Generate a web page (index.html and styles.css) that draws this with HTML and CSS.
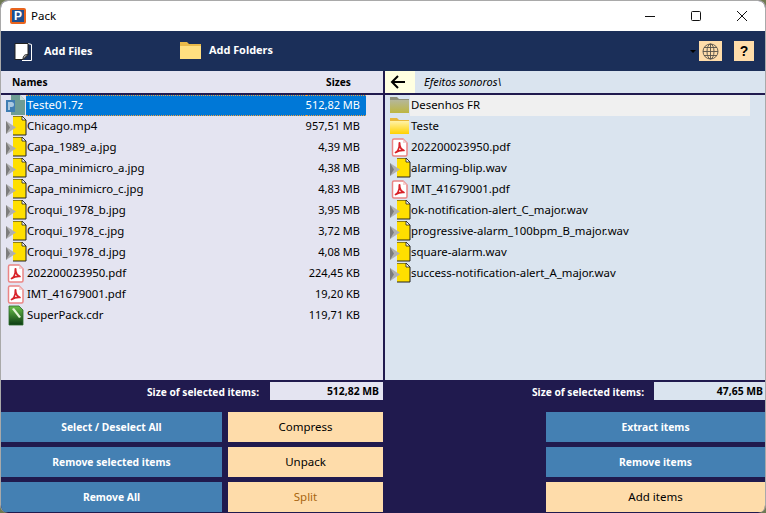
FILE: index.html
```html
<!DOCTYPE html>
<html lang="en">
<head>
    <meta charset="UTF-8">
    <meta name="viewport" content="width=device-width, initial-scale=1.0">
    <title>Pack</title>
    <link rel="stylesheet" href="styles.css">
</head>
<body>
    <svg class="defs" width="0" height="0">
        <defs>
            <linearGradient id="cdr-grad" x1="0" y1="0" x2="0" y2="1">
                <stop offset="0" stop-color="#6cc24a"/>
                <stop offset="1" stop-color="#0a3a12"/>
            </linearGradient>
            <linearGradient id="folder-grad" x1="0" y1="0" x2="0" y2="1">
                <stop offset="0" stop-color="#fff2a8"/>
                <stop offset="1" stop-color="#ffd200"/>
            </linearGradient>
            <linearGradient id="folder-sel-grad" x1="0" y1="0" x2="0" y2="1">
                <stop offset="0" stop-color="#b5b79a"/>
                <stop offset="1" stop-color="#bdb640"/>
            </linearGradient>
        </defs>
        <symbol id="i-media" viewBox="0 0 24 21">
            <path d="M9 0h9l4 4v15H9z" fill="#ffdf00"/>
            <path d="M9 0h9l4 4v15H9" fill="none" stroke="#222"/>
            <path d="M18 0v4h4z" fill="#fff" stroke="#222" stroke-width=".8"/>
            <path d="M2 5l10 6.500L2 18z" fill="#b0b0b0"/>
            <path d="M2 5l4 6.500L2 18z" fill="#7c7c7c"/>
        </symbol>
        <symbol id="i-pdf" viewBox="0 0 24 21">
            <path d="M6 2h9l4 4v11.500a1.500 1.500 0 0 1-1.500 1.500H6a1.500 1.500 0 0 1-1.500-1.500v-14A1.500 1.500 0 0 1 6 2z" fill="#fff" stroke="#ea8585" stroke-width="1.500"/>
            <path d="M15 2v4h4z" fill="#f5d0d0"/>
            <path d="M7.500 15.500c2-1 3.500-4 4-7.500.5 2.500 2 4.500 4.500 5.500-3-.2-6 .4-8.500 2z" fill="none" stroke="#d8232a" stroke-width="1.700" stroke-linejoin="round"/>
            <path d="M11.500 8V6" stroke="#d8232a" stroke-width="2" stroke-linecap="round"/>
        </symbol>
        <symbol id="i-cdr" viewBox="0 0 24 21">
            <path d="M5 1h10l4 4v15H5z" fill="url(#cdr-grad)" stroke="#2b6b2b" stroke-width=".8"/>
            <path d="M8 4l7 9 2-1-7-9z" fill="#e6f5d8"/>
        </symbol>
        <symbol id="i-7z" viewBox="0 0 24 21">
            <path d="M7 0h9l5 5v15H7z" fill="#6e9c94"/>
            <path d="M16 0v5h5z" fill="#c8ddd8"/>
            <rect x="2" y="5" width="9" height="12" fill="#3f7db3"/>
            <path d="M4 7h3.500a2 2 0 0 1 0 5H6v3H4z" fill="#a9c8e0"/>
        </symbol>
        <symbol id="i-folder" viewBox="0 0 24 21">
            <path d="M2 2h7l2 2h10v3H2z" fill="#e8b83a"/>
            <path d="M2 5h19v13H2z" fill="url(#folder-grad)"/>
        </symbol>
        <symbol id="i-folder-sel" viewBox="0 0 24 21">
            <path d="M2 2h7l2 2h10v3H2z" fill="#8f9078"/>
            <path d="M2 5h19v13H2z" fill="url(#folder-sel-grad)"/>
        </symbol>
    </svg>

    <div class="window">
        <div class="titlebar">
            <div class="app-logo">P</div>
            <span class="app-title">Pack</span>
            <div class="win-controls">
                <svg width="12" height="12" viewBox="0 0 12 12"><path d="M1 6.500h10" stroke="#111" fill="none"/></svg>
                <svg width="12" height="12" viewBox="0 0 12 12"><rect x="1.500" y="1.500" width="9" height="9" rx="1" stroke="#111" fill="none"/></svg>
                <svg width="12" height="12" viewBox="0 0 12 12"><path d="M1 1l10 10M11 1L1 11" stroke="#111" fill="none"/></svg>
            </div>
        </div>

        <div class="toolbar">
            <div class="tool tool-files">
                <svg width="19" height="19" viewBox="0 0 19 19">
                    <path d="M14 1.500l3.500 1v16H8" fill="none" stroke="#fff"/>
                    <path d="M1 1.500h13v11l-5 5H1z" fill="#fff" stroke="#222"/>
                    <path d="M14 12.500c-2 0-5 0-5 5z" fill="#bbb" stroke="#222"/>
                </svg>
                <span>Add Files</span>
            </div>
            <div class="tool tool-folders">
                <svg width="21" height="17" viewBox="0 0 21 17">
                    <path d="M0 0h7l2 2h12v15H0z" fill="#e9b949"/>
                    <path d="M0 4h21v13H0z" fill="#ffdf80"/>
                </svg>
                <span>Add Folders</span>
            </div>
            <div class="tool-right">
                <span class="drop-arrow"></span>
                <div class="tool-btn globe">
                    <svg width="17" height="17" viewBox="0 0 17 17" fill="none" stroke="#55504a" stroke-width=".9">
                        <circle cx="8.500" cy="8.500" r="7.500"/>
                        <ellipse cx="8.500" cy="8.500" rx="3.500" ry="7.500"/>
                        <path d="M8.500 1v15M1 8.500h15M2 4.500h13M2 12.500h13"/>
                    </svg>
                </div>
                <div class="tool-btn help">?</div>
            </div>
        </div>

        <div class="panes">
            <div class="pane pane-left">
                <div class="pane-head">
                    <span class="head-names">Names</span>
                    <span class="head-sizes">Sizes</span>
                </div>
                <ul class="file-list">
                    <li class="row selected"><svg class="ico"><use href="#i-7z"/></svg><span class="name">Teste01.7z</span><span class="size">512,82 MB</span></li>
                    <li class="row"><svg class="ico"><use href="#i-media"/></svg><span class="name">Chicago.mp4</span><span class="size">957,51 MB</span></li>
                    <li class="row"><svg class="ico"><use href="#i-media"/></svg><span class="name">Capa_1989_a.jpg</span><span class="size">4,39 MB</span></li>
                    <li class="row"><svg class="ico"><use href="#i-media"/></svg><span class="name">Capa_minimicro_a.jpg</span><span class="size">4,38 MB</span></li>
                    <li class="row"><svg class="ico"><use href="#i-media"/></svg><span class="name">Capa_minimicro_c.jpg</span><span class="size">4,83 MB</span></li>
                    <li class="row"><svg class="ico"><use href="#i-media"/></svg><span class="name">Croqui_1978_b.jpg</span><span class="size">3,95 MB</span></li>
                    <li class="row"><svg class="ico"><use href="#i-media"/></svg><span class="name">Croqui_1978_c.jpg</span><span class="size">3,72 MB</span></li>
                    <li class="row"><svg class="ico"><use href="#i-media"/></svg><span class="name">Croqui_1978_d.jpg</span><span class="size">4,08 MB</span></li>
                    <li class="row"><svg class="ico"><use href="#i-pdf"/></svg><span class="name">202200023950.pdf</span><span class="size">224,45 KB</span></li>
                    <li class="row"><svg class="ico"><use href="#i-pdf"/></svg><span class="name">IMT_41679001.pdf</span><span class="size">19,20 KB</span></li>
                    <li class="row"><svg class="ico"><use href="#i-cdr"/></svg><span class="name">SuperPack.cdr</span><span class="size">119,71 KB</span></li>
                </ul>
            </div>

            <div class="pane pane-right">
                <div class="pane-head">
                    <div class="back-btn">
                        <svg width="16" height="14" viewBox="0 0 16 14" fill="none" stroke="#000" stroke-width="2"><path d="M15 7H2M8 1L2 7l6 6"/></svg>
                    </div>
                    <span class="path">Efeitos sonoros\</span>
                </div>
                <ul class="file-list">
                    <li class="row hover"><svg class="ico"><use href="#i-folder-sel"/></svg><span class="name">Desenhos FR</span></li>
                    <li class="row"><svg class="ico"><use href="#i-folder"/></svg><span class="name">Teste</span></li>
                    <li class="row"><svg class="ico"><use href="#i-pdf"/></svg><span class="name">202200023950.pdf</span></li>
                    <li class="row"><svg class="ico"><use href="#i-media"/></svg><span class="name">alarming-blip.wav</span></li>
                    <li class="row"><svg class="ico"><use href="#i-pdf"/></svg><span class="name">IMT_41679001.pdf</span></li>
                    <li class="row"><svg class="ico"><use href="#i-media"/></svg><span class="name">ok-notification-alert_C_major.wav</span></li>
                    <li class="row"><svg class="ico"><use href="#i-media"/></svg><span class="name">progressive-alarm_100bpm_B_major.wav</span></li>
                    <li class="row"><svg class="ico"><use href="#i-media"/></svg><span class="name">square-alarm.wav</span></li>
                    <li class="row"><svg class="ico"><use href="#i-media"/></svg><span class="name">success-notification-alert_A_major.wav</span></li>
                </ul>
            </div>
        </div>

        <div class="footer">
            <div class="foot-side foot-left">
                <div class="size-line">
                    <span class="size-label">Size of selected items:</span>
                    <span class="size-box">512,82 MB</span>
                </div>
                <div class="actions">
                    <button class="btn blue">Select / Deselect All</button>
                    <button class="btn peach">Compress</button>
                    <button class="btn blue">Remove selected items</button>
                    <button class="btn peach">Unpack</button>
                    <button class="btn blue">Remove All</button>
                    <button class="btn peach off">Split</button>
                </div>
            </div>
            <div class="foot-side foot-right">
                <div class="size-line">
                    <span class="size-label">Size of selected items:</span>
                    <span class="size-box">47,65 MB</span>
                </div>
                <div class="actions">
                    <button class="btn blue">Extract items</button>
                    <button class="btn blue">Remove items</button>
                    <button class="btn peach">Add items</button>
                </div>
            </div>
        </div>
    </div>
</body>
</html>
```

FILE: styles.css
```css
* {
    box-sizing: border-box;
}

html, body {
    margin: 0;
    height: 100%;
    overflow: hidden;
}

body {
    background: #6f7a52;
    font-family: "Noto Sans", Arial, sans-serif;
    font-size: 11px;
    color: #000;
}

.defs {
    display: block;
    height: 0;
}

.window {
    width: 766px;
    height: 513px;
    border: 1px solid #a9a9a9;
    border-bottom: 0;
    border-radius: 8px;
    overflow: hidden;
    display: flex;
    flex-direction: column;
    background: #201a4e;
}

.titlebar {
    height: 30px;
    background: #fff;
    display: flex;
    align-items: center;
    padding-left: 9px;
    flex: none;
}

.app-logo {
    width: 16px;
    height: 16px;
    background: #1f4f8f;
    border: 2px solid #e8641e;
    border-radius: 2px;
    color: #fff;
    font: bold 12px/12px "Liberation Sans", sans-serif;
    text-align: center;
}

.app-title {
    margin-left: 5px;
    padding-bottom: 2px;
    font-size: 11.5px;
}

.win-controls {
    margin-left: auto;
    display: flex;
    gap: 34px;
    padding-right: 17px;
}

.toolbar {
    height: 40px;
    background: #1b2f59;
    color: #fff;
    display: flex;
    align-items: center;
    flex: none;
    font-weight: 700;
    font-size: 10.9px;
}

.tool {
    display: flex;
    align-items: center;
}

.tool span {
    padding-bottom: 2px;
}

.tool-files {
    padding-left: 13px;
    gap: 11px;
    width: 179px;
}

.tool-folders {
    gap: 8px;
    margin-top: -2px;
}

.tool-right {
    margin-left: auto;
    display: flex;
    align-items: center;
    padding-right: 11px;
}

.drop-arrow {
    border: 3px solid transparent;
    border-top: 3px solid #000;
    margin: 3px 3px 0 0;
}

.tool-btn {
    height: 20px;
    background: #fedcaa;
    display: flex;
    align-items: center;
    justify-content: center;
    color: #000;
}

.globe {
    width: 23px;
}

.help {
    width: 20px;
    margin-left: 12px;
    font: bold 14px "Liberation Sans", sans-serif;
}

.panes {
    flex: 1;
    display: flex;
    gap: 2px;
    min-height: 0;
}

.pane {
    display: flex;
    flex-direction: column;
}

.pane-left {
    width: 382px;
    background: #e4e4f1;
}

.pane-right {
    flex: 1;
    background: #dae4ef;
}

.pane-head {
    height: 24px;
    border-bottom: 2px solid #201a4e;
    display: flex;
    align-items: center;
    flex: none;
    font-weight: 700;
    font-size: 10.2px;
}

.head-names {
    margin-left: 11px;
}

.head-sizes {
    margin-left: auto;
    margin-right: 32px;
}

.back-btn {
    width: 30px;
    height: 22px;
    background: #ffffe1;
    display: flex;
    align-items: center;
    padding-left: 5px;
}

.path {
    margin-left: 9px;
    padding-bottom: 2px;
    font-style: italic;
    font-weight: 400;
    font-size: 11px;
}

.file-list {
    list-style: none;
    margin: 0;
    padding: 0;
}

.row {
    height: 21px;
    display: flex;
    align-items: center;
    position: relative;
    padding-left: 25px;
}

.pane-left .row {
    width: 365px;
}

.ico {
    position: absolute;
    left: 3px;
    top: 0;
    width: 24px;
    height: 21px;
}

.name {
    flex: 1;
    white-space: nowrap;
    padding: 0 0 2px 1px;
    font-size: 11.4px;
}

.size {
    padding: 0 6px 2px 0;
}

.selected {
    background: #0078d7;
    background-clip: content-box;
    color: #fff;
}

.selected .name, .selected .size {
    height: 100%;
    padding-bottom: 0;
    line-height: 18px;
    border-top: 1px dotted #f0a040;
    border-bottom: 1px dotted #f0a040;
}

.selected .ico {
    z-index: 1;
}

.hover {
    width: 365px;
}

.hover .name {
    background: #f0f0f0;
    height: 100%;
    padding-bottom: 0;
    line-height: 19px;
}

.footer {
    height: 133px;
    display: flex;
    gap: 2px;
    flex: none;
}

.foot-side {
    padding-top: 2px;
}

.foot-left {
    width: 382px;
}

.foot-right {
    flex: 1;
}

.size-line {
    height: 18px;
    display: flex;
    justify-content: flex-end;
    align-items: center;
    color: #fff;
    font-weight: 700;
    font-size: 10.2px;
}

.size-label {
    padding-top: 1px;
}

.size-box {
    height: 18px;
    width: 113px;
    line-height: 18px;
    background: #e4e4f1;
    color: #000;
    text-align: right;
    padding-right: 4px;
    margin-left: 11px;
    font-size: 10.4px;
}

.foot-right .size-box {
    width: 111px;
    background: #dae4ef;
    margin-left: 10px;
    padding-right: 2px;
}

.actions {
    margin-top: 12px;
    display: grid;
    grid-template-columns: 221px 155px;
    grid-auto-rows: 30px;
    column-gap: 6px;
    row-gap: 5px;
}

.foot-right .actions {
    grid-template-columns: 219px;
    justify-content: end;
}

.btn {
    border: 0;
    padding: 0 0 2px;
    font-family: inherit;
    font-size: 11.5px;
}

.blue {
    background: #4480b3;
    color: #fff;
    font-weight: 700;
    font-size: 10.3px;
    padding: 0;
}

.peach {
    background: #fedcaa;
    color: #000;
}

.off {
    color: #a8660f;
}
```
